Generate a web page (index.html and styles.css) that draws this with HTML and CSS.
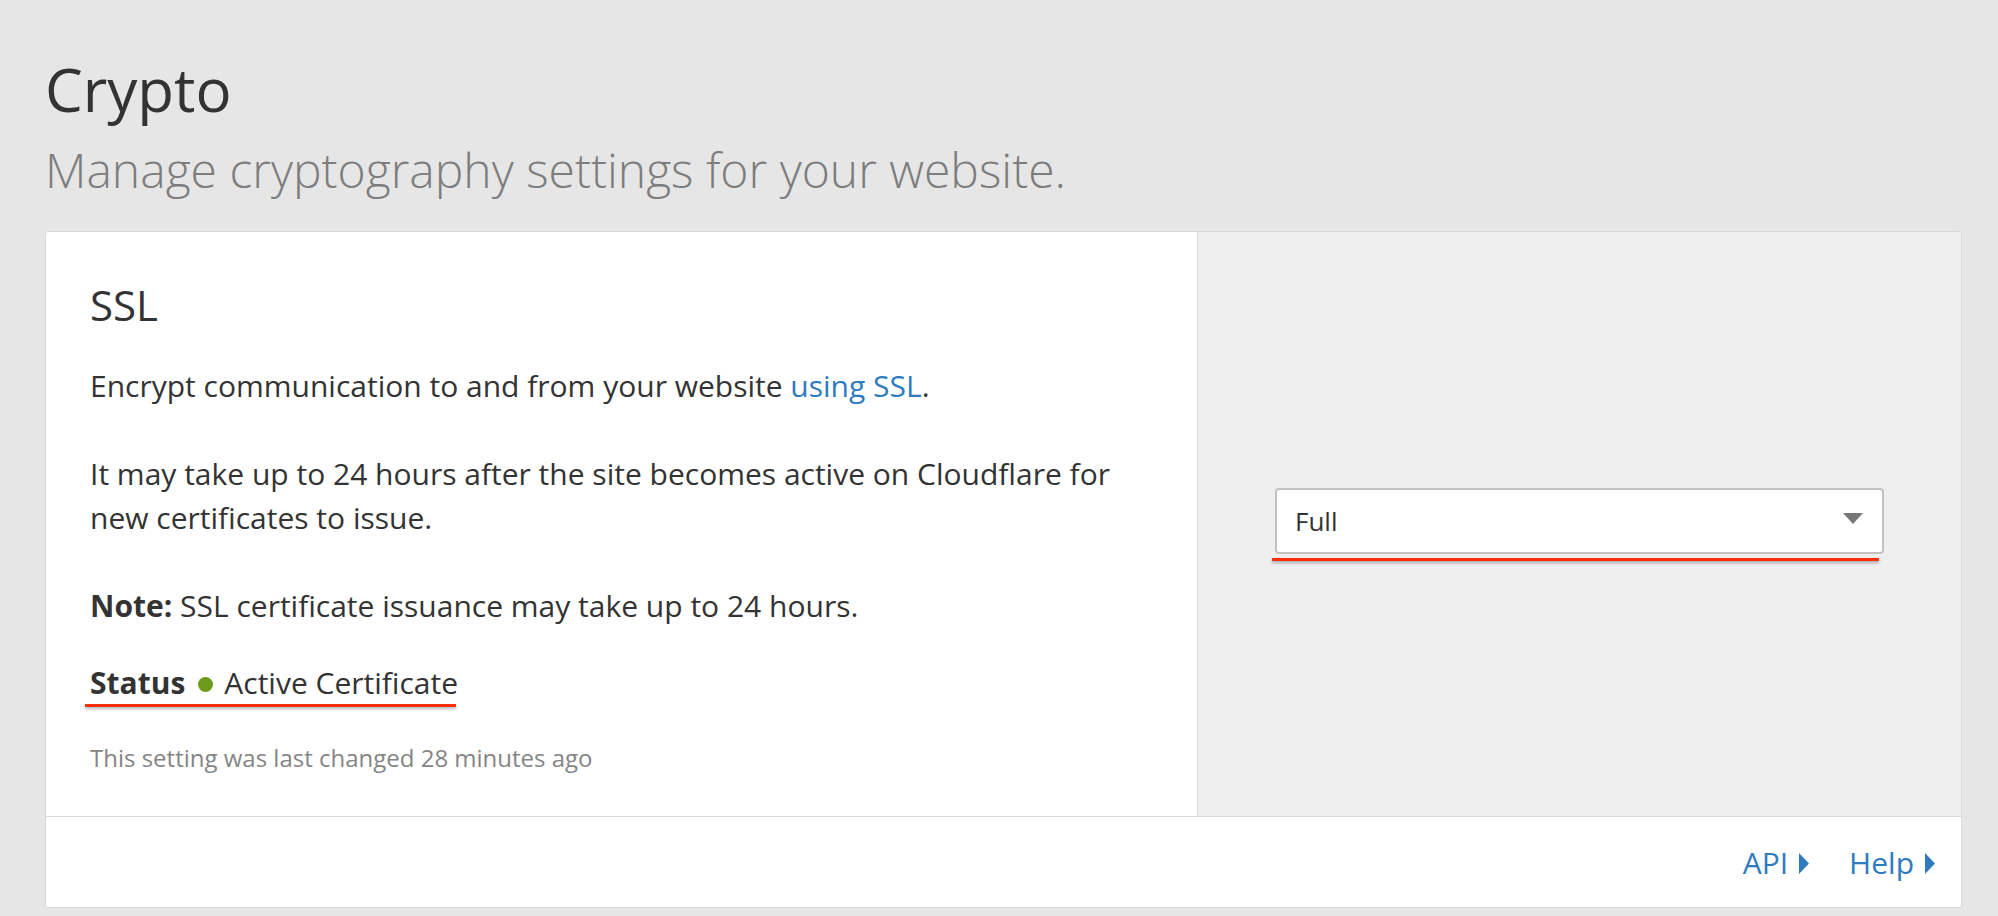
FILE: index.html
```html
<!DOCTYPE html>
<html lang="en">
<head>
<meta charset="utf-8">
<title>Crypto</title>
<link rel="stylesheet" href="styles.css">
</head>
<body>
<div class="page">
  <header class="page-header">
    <h1 class="page-title">Crypto</h1>
    <p class="page-subtitle">Manage cryptography settings for your website.</p>
  </header>
  <section class="card">
    <div class="card-main">
      <div class="card-body">
        <h2 class="card-title">SSL</h2>
        <p class="text">Encrypt communication to and from your website <a class="link" href="#">using SSL</a>.</p>
        <p class="text">It may take up to 24 hours after the site becomes active on Cloudflare for new certificates to issue.</p>
        <p class="text text-note"><strong>Note:</strong> SSL certificate issuance may take up to 24 hours.</p>
        <div class="status-wrap">
          <div class="status"><strong>Status</strong><span class="dot"></span><span>Active Certificate</span></div>
          <div class="mark mark-status"></div>
        </div>
        <p class="changed">This setting was last changed 28 minutes ago</p>
      </div>
      <div class="card-control">
        <div class="select-wrap">
          <div class="select">
            <span class="select-value">Full</span>
            <svg class="select-arrow" width="20" height="11" viewBox="0 0 20 11"><path d="M0 0 H20 L10 11 Z" fill="#777"/></svg>
          </div>
          <div class="mark mark-select"></div>
        </div>
      </div>
    </div>
    <footer class="card-footer">
      <a class="footer-link" href="#">API<svg class="caret" width="10" height="21" viewBox="0 0 10 21"><path d="M0 0 L10 10.5 L0 21 Z" fill="#2f7bbf"/></svg></a>
      <a class="footer-link" href="#">Help<svg class="caret" width="10" height="21" viewBox="0 0 10 21"><path d="M0 0 L10 10.5 L0 21 Z" fill="#2f7bbf"/></svg></a>
    </footer>
  </section>
</div>
</body>
</html>
```

FILE: styles.css
```css
* { box-sizing: border-box; }

html, body {
  margin: 0;
  padding: 0;
}

body {
  background: #e6e6e6;
  font-family: "Open Sans", "Noto Sans", sans-serif;
  color: #333;
}

.page {
  padding: 53px 36px 10px 45px;
}

.page-header {
  margin-bottom: 35px;
}

.page-title {
  margin: 0;
  font-size: 60px;
  line-height: 72px;
  font-weight: 400;
  color: #333;
}

.page-subtitle {
  margin: 18px 0 0;
  font-size: 48px;
  line-height: 53px;
  font-weight: 300;
  color: #7d7d7d;
}

.card {
  background: #fff;
  border: 1px solid #d9d9d9;
  border-radius: 3px;
  overflow: hidden;
}

.card-main {
  display: grid;
  grid-template-columns: 1151px 1fr;
}

.card-body {
  padding: 48px 44px 42px 44px;
}

.card-title {
  margin: 0 0 34px;
  font-size: 42px;
  line-height: 50px;
  font-weight: 400;
}

.text {
  margin: 0 0 44px;
  font-size: 30px;
  line-height: 44px;
}

.text-note {
  margin-bottom: 37px;
}

.text strong, .status strong {
  font-weight: 700;
}

.link {
  color: #2f7bbf;
  text-decoration: none;
}

.status-wrap {
  display: inline-flex;
  flex-direction: column;
}

.status {
  display: flex;
  align-items: center;
  font-size: 30px;
  line-height: 36px;
}

.dot {
  width: 15px;
  height: 15px;
  border-radius: 50%;
  background: #6f9b1d;
  margin: 2px 11px 0 13px;
}

.mark {
  height: 3px;
  background: #ff2d0a;
  box-shadow: 0 2px 3px rgba(0, 0, 0, 0.3);
}

.mark-status {
  margin-left: -5px;
  width: 371px;
  margin-top: 3px;
}

.changed {
  margin: 34px 0 0;
  font-size: 24px;
  line-height: 33px;
  color: #858585;
}

.card-control {
  background: #efefef;
  border-left: 1px solid #d9d9d9;
  display: flex;
  align-items: center;
  padding: 0 77px;
}

.select-wrap {
  width: 100%;
}

.select {
  height: 66px;
  background: #fff;
  border: 2px solid #c2c2c2;
  border-radius: 4px;
  display: flex;
  align-items: center;
  justify-content: space-between;
  padding: 0 19px 0 18px;
}

.select-value {
  font-size: 26px;
  color: #333;
}

.select-arrow {
  display: block;
  margin-top: -4px;
}

.mark-select {
  margin: 4px 5px 0 -3px;
}

.card-footer {
  border-top: 1px solid #d9d9d9;
  height: 91px;
  display: flex;
  justify-content: flex-end;
  align-items: center;
  gap: 40px;
  padding: 1px 26px 0 0;
}

.footer-link {
  color: #2f7bbf;
  text-decoration: none;
  font-size: 30px;
  display: inline-flex;
  align-items: center;
  gap: 11px;
}

.caret {
  display: block;
  margin-top: 2px;
}
```
